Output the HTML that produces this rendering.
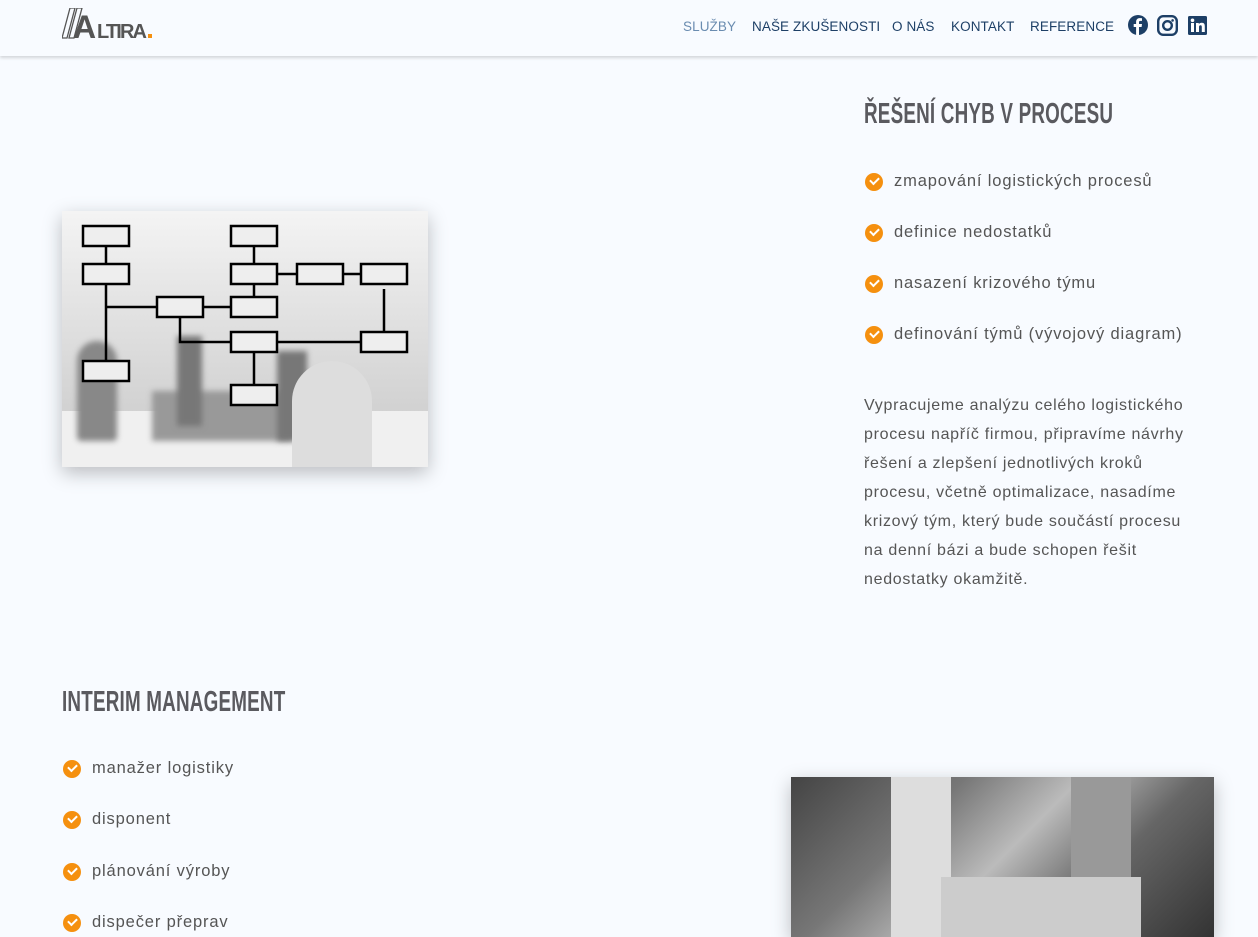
<!DOCTYPE html>
<html><head><meta charset="utf-8"><style>
body{margin:0;background:#f8fbff;font-family:"Liberation Sans",sans-serif;color:#555;width:1258px;height:931px;overflow:hidden;position:relative}
.hdr{position:absolute;top:0;left:0;width:1258px;height:56px;background:#f8fbff;box-shadow:0 2px 3px rgba(0,0,0,.15);z-index:2}
.nav{position:absolute;top:19px;font-size:13.5px;color:#1d3f66;letter-spacing:.1px}
.nav span{position:absolute;white-space:nowrap}
h2{position:absolute;margin:0;font-weight:bold;font-size:29px;color:#5a5a5f;transform:scaleX(.65);transform-origin:left top;white-space:nowrap;letter-spacing:.3px}
.li{position:absolute;font-size:16.5px;color:#555;white-space:nowrap;letter-spacing:.85px}
.li i{position:absolute;left:-29px;top:1px;width:18px;height:18px;border-radius:50%;background:#f5900f}
.li i:after{content:"";position:absolute;left:5px;top:4px;width:7px;height:4px;border-left:2px solid #fff;border-bottom:2px solid #fff;transform:rotate(-45deg)}
.p{position:absolute;left:864px;top:391px;width:380px;font-size:16px;line-height:29px;color:#555;letter-spacing:.7px;white-space:nowrap}
</style></head><body>
<div class="hdr">
<svg style="position:absolute;left:62px;top:8px" width="95" height="32">
<polygon points="8,0 13,0 5,30 0,30" fill="none" stroke="#555" stroke-width="1.3"/>
<polygon points="15,0 20,0 12,30 7,30" fill="none" stroke="#555" stroke-width="1.3"/>
<text x="11" y="30" font-family="Liberation Sans" font-weight="bold" font-size="32" fill="#555">A</text>
<text x="35" y="30" font-family="Liberation Sans" font-weight="bold" font-size="20" fill="#555" textLength="50">LTIRA</text>
<rect x="86" y="26" width="4" height="4" fill="#f5900f"/>
</svg>
<div class="nav"><span style="left:683px;color:#6a8cb0">SLUŽBY</span><span style="left:752px">NAŠE ZKUŠENOSTI</span><span style="left:892px">O NÁS</span><span style="left:951px">KONTAKT</span><span style="left:1030px">REFERENCE</span></div>
<svg style="position:absolute;left:1128px;top:15px" width="20" height="20" viewBox="0 0 20 20"><circle cx="10" cy="10" r="10" fill="#1d3f66"/><path d="M11 20V12h2.6l.4-3H11V7.3c0-.9.3-1.4 1.5-1.4H14V3.2c-.3 0-1.2-.1-2.2-.1-2.2 0-3.700 1.3-3.700 3.8V9H5.700v3h2.4v8z" fill="#fff"/></svg>
<svg style="position:absolute;left:1157px;top:15px" width="21" height="21" viewBox="0 0 21 21"><rect x="1.2" y="1.2" width="18.6" height="18.6" rx="5" fill="none" stroke="#1d3f66" stroke-width="2.4"/><circle cx="10.5" cy="10.5" r="4.3" fill="none" stroke="#1d3f66" stroke-width="2.4"/><circle cx="15.6" cy="5.4" r="1.3" fill="#1d3f66"/></svg>
<svg style="position:absolute;left:1188px;top:16px" width="19" height="19" viewBox="0 0 19 19"><rect width="19" height="19" rx="1.5" fill="#1d3f66"/><rect x="3" y="7" width="3" height="9" fill="#fff"/><circle cx="4.5" cy="4.3" r="1.8" fill="#fff"/><path d="M8 7h2.8v1.3c.5-.9 1.6-1.5 3-1.5 2.4 0 3 1.5 3 3.6V16h-3v-4.8c0-1.1-.2-1.9-1.3-1.9-1.2 0-1.5.9-1.5 1.900V16H8z" fill="#fff"/></svg>
</div>

<div style="position:absolute;left:62px;top:211px;width:366px;height:256px;background:linear-gradient(#f4f4f4 0,#e6e6e6 30%,#c8c8c8 100%);box-shadow:0 6px 18px rgba(0,0,0,.25);overflow:hidden">
<div style="position:absolute;left:0;top:200px;width:366px;height:56px;background:#f0f0f0"></div>
<div style="position:absolute;left:15px;top:130px;width:40px;height:100px;background:#888;border-radius:20px 20px 4px 4px;filter:blur(3px)"></div>
<div style="position:absolute;left:90px;top:180px;width:140px;height:50px;background:#999;filter:blur(3px)"></div>
<div style="position:absolute;left:115px;top:125px;width:25px;height:90px;background:#777;filter:blur(3px)"></div>
<div style="position:absolute;left:215px;top:140px;width:30px;height:90px;background:#777;filter:blur(3px)"></div>
<div style="position:absolute;left:230px;top:150px;width:80px;height:110px;background:#ddd;border-radius:40px 40px 0 0"></div>
<svg style="position:absolute;left:0;top:0" width="366" height="256" fill="none" stroke="#000" stroke-width="2.5">
<rect x="21" y="15" width="46" height="20" fill="#eee"/><rect x="169" y="15" width="46" height="20" fill="#eee"/>
<rect x="21" y="53" width="46" height="20" fill="#eee"/><rect x="169" y="53" width="46" height="20" fill="#eee"/><rect x="235" y="53" width="46" height="20" fill="#eee"/><rect x="299" y="53" width="46" height="20" fill="#eee"/>
<rect x="95" y="86" width="46" height="20" fill="#eee"/><rect x="169" y="86" width="46" height="20" fill="#eee"/>
<rect x="169" y="121" width="46" height="20" fill="#eee"/><rect x="299" y="121" width="46" height="20" fill="#eee"/>
<rect x="21" y="150" width="46" height="20" fill="#eee"/><rect x="169" y="174" width="46" height="20" fill="#eee"/>
<path d="M44 35v18M44 73v77M44 96h51M141 96h28M192 35v18M192 73v13M235 63h-20M299 63h-18M118 106v25h51M215 131h84M322 121V78M192 141v33"/>
</svg>
</div>

<h2 style="left:864px;top:98px">ŘEŠENÍ CHYB V PROCESU</h2>
<div class="li" style="left:894px;top:172px"><i></i>zmapování logistických procesů</div>
<div class="li" style="left:894px;top:223px"><i></i>definice nedostatků</div>
<div class="li" style="left:894px;top:274px"><i></i>nasazení krizového týmu</div>
<div class="li" style="left:894px;top:325px"><i></i>definování týmů (vývojový diagram)</div>
<div class="p">Vypracujeme analýzu celého logistického<br>procesu napříč firmou, připravíme návrhy<br>řešení a zlepšení jednotlivých kroků<br>procesu, včetně optimalizace, nasadíme<br>krizový tým, který bude součástí procesu<br>na denní bázi a bude schopen řešit<br>nedostatky okamžitě.</div>

<h2 style="left:62px;top:686px">INTERIM MANAGEMENT</h2>
<div class="li" style="left:92px;top:759px"><i></i>manažer logistiky</div>
<div class="li" style="left:92px;top:810px"><i></i>disponent</div>
<div class="li" style="left:92px;top:862px"><i></i>plánování výroby</div>
<div class="li" style="left:92px;top:913px"><i></i>dispečer přeprav</div>

<div style="position:absolute;left:791px;top:777px;width:423px;height:160px;background:linear-gradient(135deg,#444 0%,#777 30%,#bbb 50%,#666 70%,#333 100%);box-shadow:0 6px 18px rgba(0,0,0,.25);overflow:hidden">
<div style="position:absolute;left:100px;top:0;width:60px;height:160px;background:#ddd"></div>
<div style="position:absolute;left:280px;top:0;width:60px;height:110px;background:#999"></div>
<div style="position:absolute;left:150px;top:100px;width:200px;height:60px;background:#ccc"></div>
</div>
</body></html>
